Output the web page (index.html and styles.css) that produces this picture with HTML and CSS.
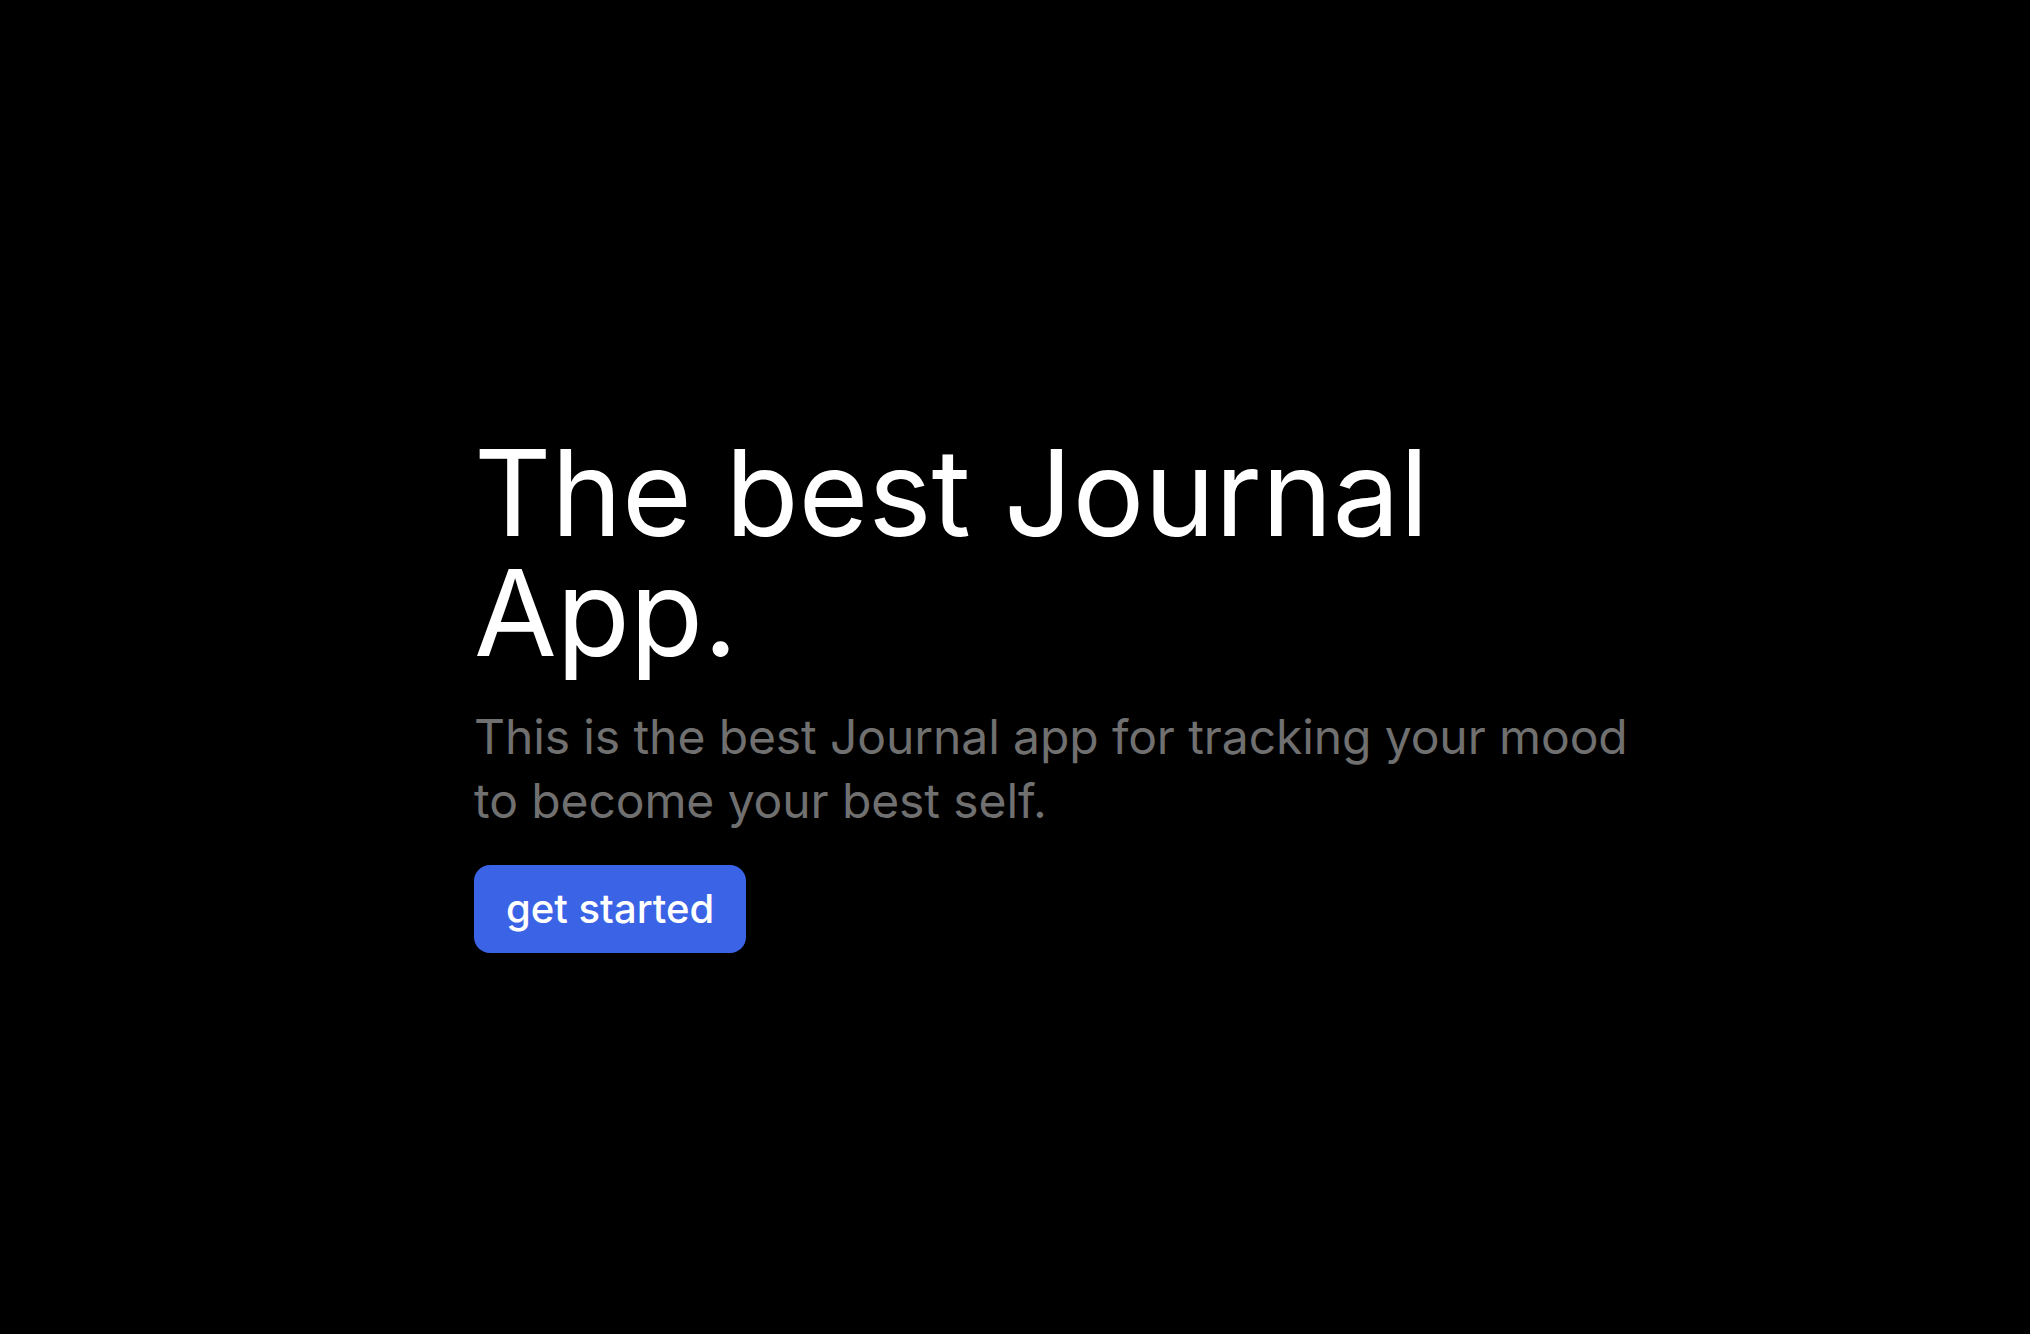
FILE: index.html
```html
<!DOCTYPE html>
<html lang="en">
<head>
<meta charset="utf-8">
<title>Journal</title>
<link rel="stylesheet" href="styles.css">
</head>
<body>
<main class="page">
  <section class="hero">
    <h1 class="hero-title">The best Journal App.</h1>
    <p class="hero-text">This is the best Journal app for tracking your mood to become your best self.</p>
    <div class="hero-actions">
      <a class="btn" href="#">get started</a>
    </div>
  </section>
</main>
</body>
</html>
```

FILE: styles.css
```css
* { box-sizing: border-box; }
html, body {
  margin: 0;
  padding: 0;
  background: #000;
  width: 100%;
  height: 100%;
}
body {
  font-family: Inter, "Noto Sans", sans-serif;
  color: #fff;
}
.page {
  min-height: 100vh;
  padding: 433px 0 0 474px;
}
.hero {
  width: 1160px;
}
.hero-title {
  margin: 0;
  font-size: 120px;
  line-height: 120px;
  font-weight: 400;
  letter-spacing: -0.2px;
  color: #fff;
}
.hero-text {
  margin: 32px 0 0;
  font-size: 48px;
  line-height: 64px;
  letter-spacing: -0.1px;
  color: #707070;
}
.hero-actions {
  margin-top: 32px;
  display: flex;
}
.btn {
  display: inline-block;
  background: #3b63e6;
  color: #fff;
  text-decoration: none;
  font-size: 40px;
  font-weight: 500;
  line-height: 56px;
  padding: 16px 32px;
  border-radius: 16px;
}
```
